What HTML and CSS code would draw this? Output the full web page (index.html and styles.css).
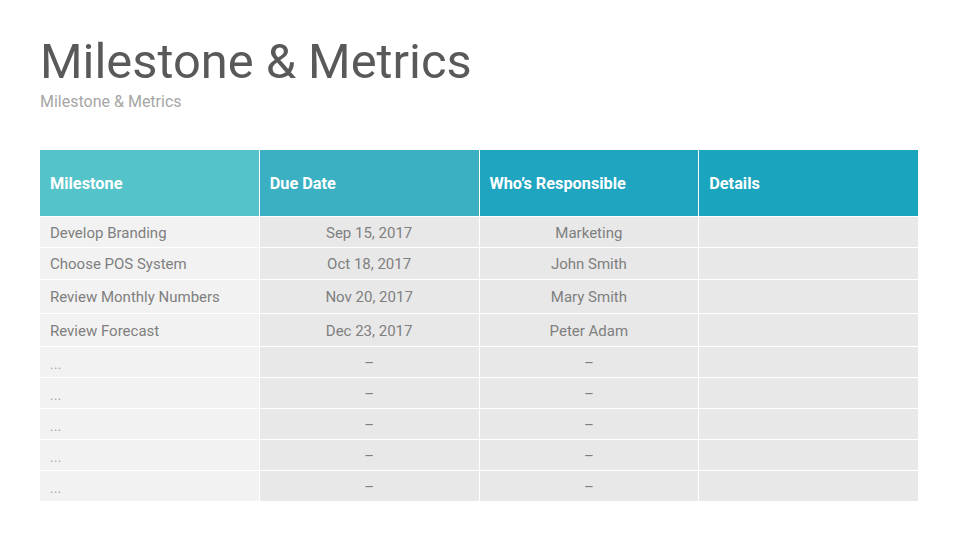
FILE: index.html
```html
<!DOCTYPE html>
<html>
<head>
<meta charset="utf-8">
<link rel="stylesheet" href="styles.css">
</head>
<body>
<div class="slide">
  <h1 class="title">Milestone &amp; Metrics</h1>
  <p class="subtitle">Milestone &amp; Metrics</p>
  <div class="table">
    <div class="th c1">Milestone</div>
    <div class="th c2">Due Date</div>
    <div class="th c3">Who’s Responsible</div>
    <div class="th c4">Details</div>

    <div class="td first">Develop Branding</div>
    <div class="td mid">Sep 15, 2017</div>
    <div class="td mid">Marketing</div>
    <div class="td mid"></div>

    <div class="td first">Choose POS System</div>
    <div class="td mid">Oct 18, 2017</div>
    <div class="td mid">John Smith</div>
    <div class="td mid"></div>

    <div class="td first">Review Monthly Numbers</div>
    <div class="td mid">Nov 20, 2017</div>
    <div class="td mid">Mary Smith</div>
    <div class="td mid"></div>

    <div class="td first">Review Forecast</div>
    <div class="td mid">Dec 23, 2017</div>
    <div class="td mid">Peter Adam</div>
    <div class="td mid"></div>

    <div class="td first dots">...</div>
    <div class="td mid dash">–</div>
    <div class="td mid dash">–</div>
    <div class="td mid"></div>

    <div class="td first dots">...</div>
    <div class="td mid dash">–</div>
    <div class="td mid dash">–</div>
    <div class="td mid"></div>

    <div class="td first dots">...</div>
    <div class="td mid dash">–</div>
    <div class="td mid dash">–</div>
    <div class="td mid"></div>

    <div class="td first dots">...</div>
    <div class="td mid dash">–</div>
    <div class="td mid dash">–</div>
    <div class="td mid"></div>

    <div class="td first dots">...</div>
    <div class="td mid dash">–</div>
    <div class="td mid dash">–</div>
    <div class="td mid"></div>
  </div>
</div>
</body>
</html>
```

FILE: styles.css
```css
html, body {
  margin: 0;
  padding: 0;
  background: #ffffff;
}
.slide {
  width: 960px;
  height: 540px;
  box-sizing: border-box;
  padding: 33px 42px 0 40px;
  font-family: Roboto, "Liberation Sans", sans-serif;
}
.title {
  margin: 0;
  font-size: 48.8px;
  font-weight: 400;
  line-height: 58px;
  color: #595959;
}
.subtitle {
  margin: 1px 0 0;
  font-size: 16px;
  line-height: 20px;
  color: #a6a6a6;
}
.table {
  margin-top: 38px;
  display: grid;
  grid-template-columns: repeat(4, 1fr);
  grid-template-rows: 66px 30px 31px 33px 32px 30px 30px 30px 30px 30px;
  column-gap: 1px;
  row-gap: 1px;
}
.th {
  display: flex;
  align-items: center;
  padding-left: 10px;
  color: #ffffff;
  font-weight: 700;
  font-size: 16.3px;
}
.c1 { background: #55c3ca; }
.c2 { background: #3cb0c3; }
.c3 { background: #1fa5bf; }
.c4 { background: #1ba4be; }
.td {
  display: flex;
  align-items: center;
  font-size: 15px;
  color: #7f7f7f;
  padding-top: 1px;
}
.first {
  background: #f2f2f2;
  padding-left: 10px;
}
.mid {
  background: #e8e8e8;
  justify-content: center;
}
.dots {
  font-size: 13px;
  color: #a0a0a0;
  padding-top: 4px;
  letter-spacing: 0.5px;
}
.dash {
  font-size: 15px;
  color: #808080;
}
```
